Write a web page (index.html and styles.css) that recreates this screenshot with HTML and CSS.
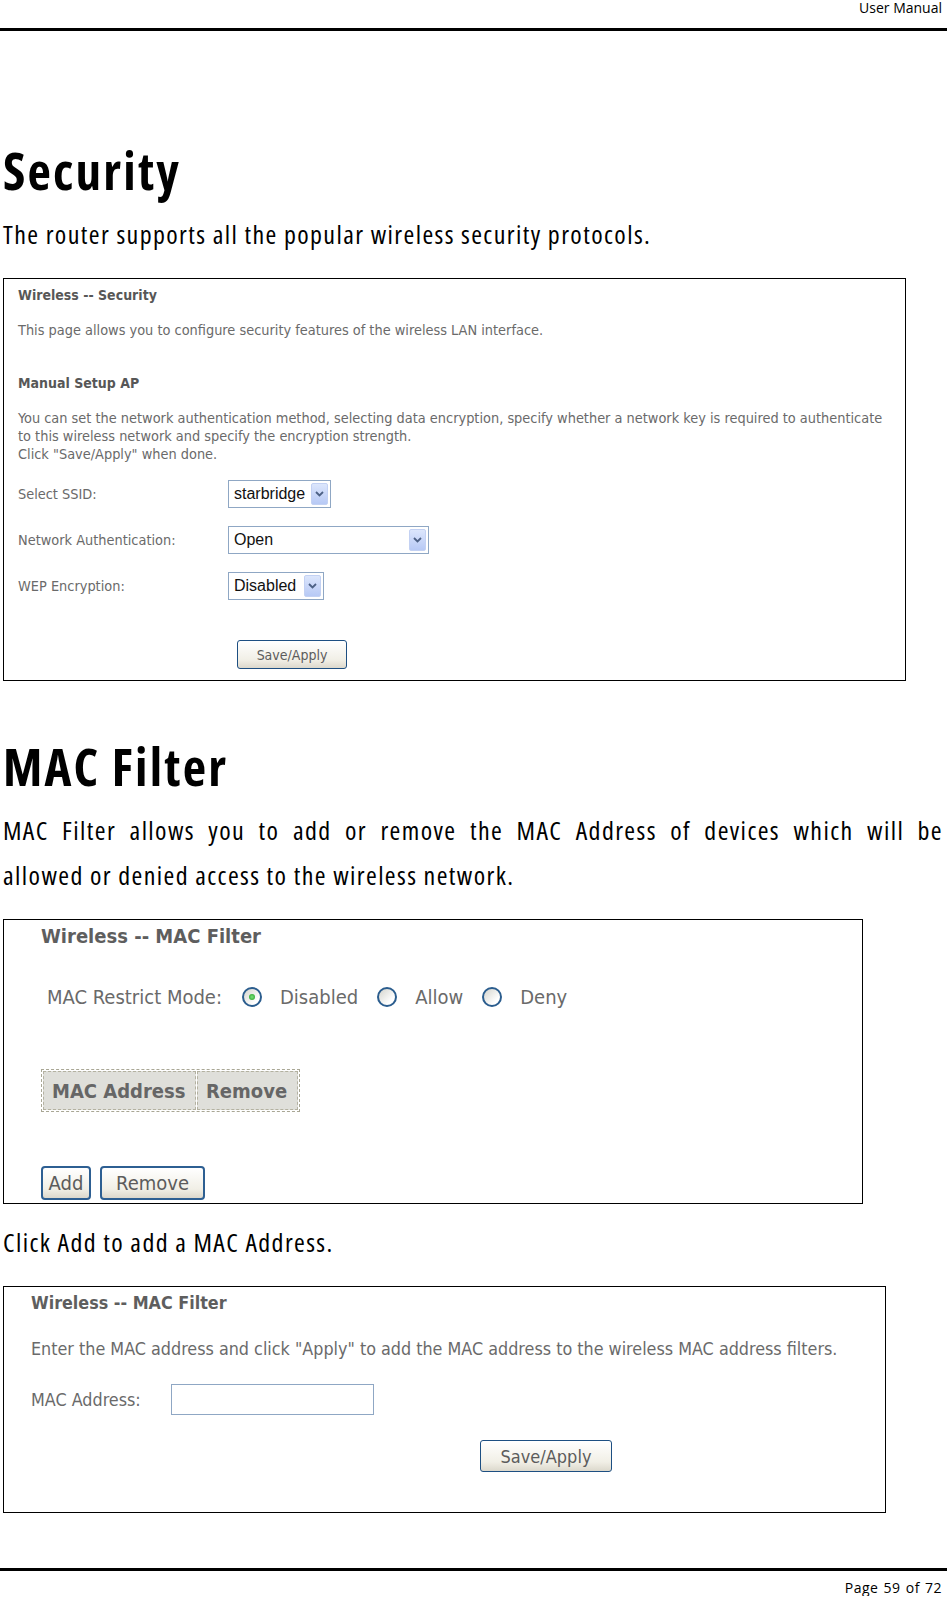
FILE: index.html
```
<!DOCTYPE html>
<html>
<head>
    <title>User Manual - Security / MAC Filter</title>
    <link rel="stylesheet" href="styles.css">
</head>
<body>
    <header class="page-head"><span>User Manual</span></header>

    <div class="page">
        <h1>Security</h1>
        <p class="lead">The router supports all the popular wireless security protocols.</p>

        <!-- screenshot: Wireless -- Security -->
        <div class="shot shot-security">
            <div class="ui-title">Wireless -- Security</div>
            <div class="ui-text intro">This page allows you to configure security features of the wireless LAN interface.</div>
            <div class="ui-title setup">Manual Setup AP</div>
            <div class="ui-text intro">You can set the network authentication method, selecting data encryption, specify whether a network key is required to authenticate<br>to this wireless network and specify the encryption strength.<br>Click "Save/Apply" when done.</div>

            <div class="form-row first">
                <span class="form-label">Select SSID:</span>
                <span class="select ssid">
                    <span class="select-value">starbridge</span>
                    <span class="select-arrow"><svg width="9" height="6" viewBox="0 0 9 6"><path d="M1 1l3.5 3.5L8 1" fill="none" stroke="#4d6185" stroke-width="1.8"/></svg></span>
                </span>
            </div>
            <div class="form-row">
                <span class="form-label">Network Authentication:</span>
                <span class="select auth">
                    <span class="select-value">Open</span>
                    <span class="select-arrow"><svg width="9" height="6" viewBox="0 0 9 6"><path d="M1 1l3.5 3.5L8 1" fill="none" stroke="#4d6185" stroke-width="1.8"/></svg></span>
                </span>
            </div>
            <div class="form-row">
                <span class="form-label">WEP Encryption:</span>
                <span class="select wep">
                    <span class="select-value">Disabled</span>
                    <span class="select-arrow"><svg width="9" height="6" viewBox="0 0 9 6"><path d="M1 1l3.5 3.5L8 1" fill="none" stroke="#4d6185" stroke-width="1.8"/></svg></span>
                </span>
            </div>

            <div class="btn-row"><span class="btn save-1">Save/Apply</span></div>
        </div>

        <h1 class="second">MAC Filter</h1>
        <p class="lead">
            <span class="justify-line">MAC Filter allows you to add or remove the MAC Address of devices which will be</span>
            <span>allowed or denied access to the wireless network.</span>
        </p>

        <!-- screenshot: Wireless -- MAC Filter -->
        <div class="shot shot-mac">
            <div class="mac-title">Wireless -- MAC Filter</div>
            <div class="mode-row">
                <span class="mode-label">MAC Restrict Mode:</span>
                <span class="radio checked"><span class="dot"></span></span>
                <span class="mode-opt">Disabled</span>
                <span class="radio"></span>
                <span class="mode-opt">Allow</span>
                <span class="radio"></span>
                <span class="mode-opt">Deny</span>
            </div>
            <table class="mac-table">
                <tr>
                    <th class="col-addr">MAC Address</th>
                    <th class="col-rm">Remove</th>
                </tr>
            </table>
            <div class="mac-buttons">
                <span class="btn big add">Add</span>
                <span class="btn big remove">Remove</span>
            </div>
        </div>

        <p class="lead after-shot">Click Add to add a MAC Address.</p>

        <!-- screenshot: add MAC address -->
        <div class="shot shot-add">
            <div class="add-title">Wireless -- MAC Filter</div>
            <div class="add-text">Enter the MAC address and click "Apply" to add the MAC address to the wireless MAC address filters.</div>
            <div class="add-row">
                <span class="add-label">MAC Address:</span>
                <span class="text-input"></span>
            </div>
            <div class="btn-row"><span class="btn save-3">Save/Apply</span></div>
        </div>
    </div>

    <footer class="page-foot"><span>Page 59 of 72</span></footer>
</body>
</html>
```
FILE: styles.css
```
body {
    margin: 0;
    font-family: "Open Sans", sans-serif;
    font-stretch: 75%;
    color: #000;
}

/* running header / footer */
.page-head {
    height: 28px;
    border-bottom: 3px solid #000;
    text-align: right;
    padding-right: 5px;
    font-size: 14px;
    line-height: 16px;
    font-stretch: 100%;
}
.page-foot {
    margin-top: 55px;
    border-top: 3px solid #000;
    text-align: right;
    padding: 9px 5px 0 0;
    font-size: 14px;
    line-height: 16px;
    font-stretch: 100%;
    letter-spacing: 0.5px;
    word-spacing: 1px;
}

.page {
    padding: 0 4px 0 3px;
}

h1 {
    margin: 109px 0 0;
    font-size: 51px;
    line-height: 60px;
    font-weight: 700;
    letter-spacing: 2.2px;
}
h1.second {
    margin-top: 55px;
}

.lead {
    margin: 12px 0 0;
    font-size: 26px;
    line-height: 45px;
    letter-spacing: 1.4px;
}
.lead span {
    display: block;
}
.justify-line {
    text-align: justify;
    text-align-last: justify;
}
.lead.after-shot {
    margin-top: 16px;
}

/* screenshots of the router web pages */
.shot {
    border: 1px solid #000;
    margin-top: 21px;
    font-family: "DejaVu Sans Condensed", "DejaVu Sans", sans-serif;
    font-stretch: normal;
    letter-spacing: 0;
    color: #6a6a6a;
}

.shot-security {
    width: 887px;
    padding: 7px 0 11px 14px;
    font-size: 14.4px;
}
.ui-title {
    font-weight: bold;
    font-size: 14px;
    color: #575757;
    line-height: 18px;
}
.ui-text {
    line-height: 18px;
    white-space: nowrap;
}
.intro {
    margin-top: 17px;
}
.ui-title.setup {
    margin-top: 35px;
}

.form-row {
    display: flex;
    align-items: center;
    margin-top: 18px;
}
.form-row.first {
    margin-top: 17px;
}
.form-label {
    width: 210px;
}
.select {
    display: flex;
    box-sizing: border-box;
    height: 28px;
    padding: 2px;
    border: 1px solid #8fa7c4;
    background: #fff;
}
.select.ssid { width: 103px; }
.select.auth { width: 201px; }
.select.wep { width: 96px; }
.select-value {
    flex: 1;
    padding-left: 3px;
    font-family: "Liberation Sans", Arial, sans-serif;
    font-size: 16px;
    line-height: 22px;
    color: #111;
}
.select-arrow {
    width: 15px;
    display: flex;
    align-items: center;
    justify-content: center;
    border: 1px solid #c3d1f3;
    border-radius: 2px;
    background: linear-gradient(#dce6fc, #b7c9f5);
}

.btn-row {
    margin-top: 40px;
}
.btn {
    display: inline-flex;
    align-items: center;
    justify-content: center;
    box-sizing: border-box;
    border: 1px solid #1d4f82;
    border-radius: 3px;
    background: linear-gradient(#ffffff, #f1efe6 70%, #dcd8cc);
    color: #5c5c5c;
}
.btn.save-1 {
    margin-left: 219px;
    width: 110px;
    height: 29px;
    font-size: 14px;
}

/* MAC filter list */
.shot-mac {
    width: 860px;
    box-sizing: border-box;
    height: 285px;
    padding: 4px 0 0 37px;
    font-size: 20px;
}
.mac-title {
    font-weight: bold;
    color: #5e5e5e;
    line-height: 24px;
}
.mode-row {
    display: flex;
    align-items: center;
    height: 22px;
    margin: 38px 0 0 6px;
}
.mode-label {
    margin-right: 20px;
}
.mode-opt {
    margin-right: 19px;
}
.radio {
    width: 20px;
    height: 20px;
    box-sizing: border-box;
    border: 2px solid #2b5d8e;
    border-radius: 50%;
    background: linear-gradient(135deg, #d4d4cd, #ffffff 75%);
    margin-right: 18px;
    display: flex;
    align-items: center;
    justify-content: center;
}
.radio .dot {
    width: 6px;
    height: 6px;
    border-radius: 50%;
    background: radial-gradient(#7be07b, #1f9d1f);
}
.mac-table {
    margin-top: 61px;
    border: 1px dashed #a9a795;
    border-spacing: 1px;
    background: #fff;
}
.mac-table th {
    height: 37px;
    padding: 0 7px 0 8px;
    background: #dfdfda;
    border: 1px dashed #b3b1a0;
    font-weight: bold;
    color: #666;
    text-align: left;
}
.col-addr { width: 136px; }
.col-rm { width: 84px; }
.mac-buttons {
    display: flex;
    gap: 9px;
    margin-top: 54px;
}
.btn.big {
    height: 34px;
    border-width: 2px;
    border-color: #2d5f92;
    border-radius: 4px;
    font-size: 20px;
}
.btn.add { width: 50px; }
.btn.remove { width: 105px; }

/* add MAC address */
.shot-add {
    width: 883px;
    box-sizing: border-box;
    padding: 5px 0 40px 27px;
    font-size: 17.8px;
}
.add-title {
    font-weight: bold;
    color: #5e5e5e;
    line-height: 22px;
}
.add-text {
    margin-top: 24px;
    line-height: 22px;
    white-space: nowrap;
}
.add-row {
    display: flex;
    align-items: center;
    margin-top: 24px;
}
.add-label {
    width: 140px;
}
.text-input {
    width: 203px;
    height: 31px;
    box-sizing: border-box;
    border: 1px solid #8fa7c4;
    background: #fff;
}
.shot-add .btn-row {
    margin-top: 25px;
}
.btn.save-3 {
    margin-left: 449px;
    width: 132px;
    height: 32px;
    font-size: 18px;
}
```
